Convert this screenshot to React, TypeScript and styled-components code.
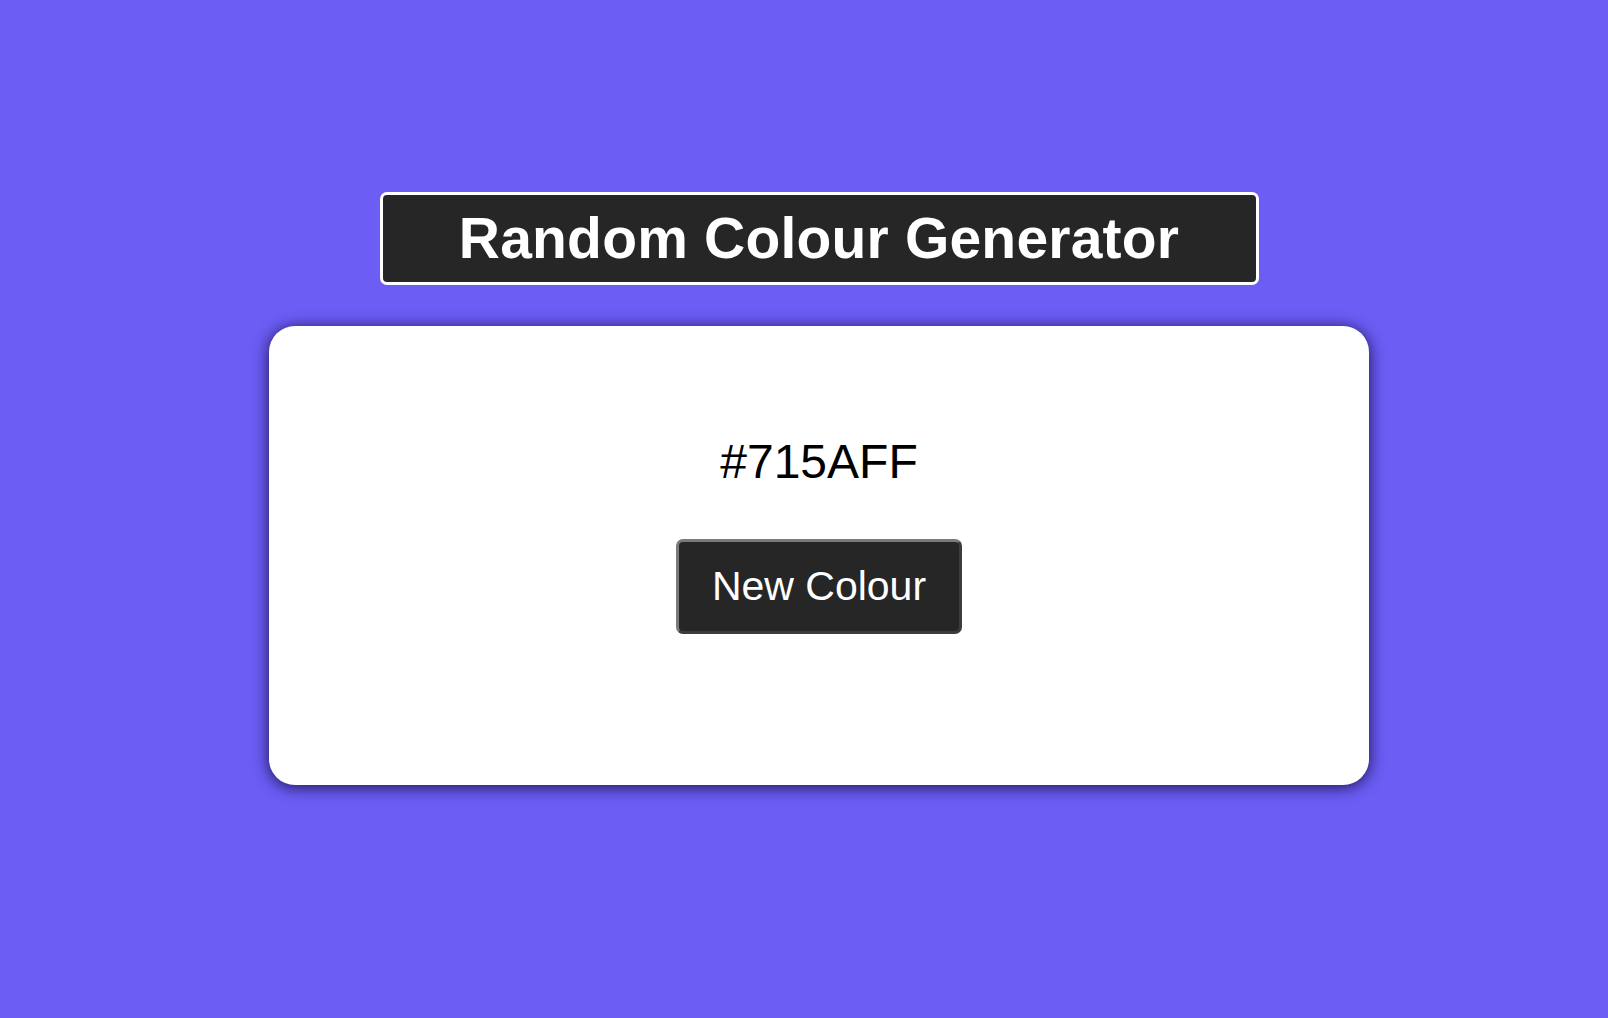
import { FC, useState } from "react";
import styled, { createGlobalStyle } from "styled-components";

const GlobalStyle = createGlobalStyle`
  body {
    margin: 0;
    background-color: #6c5df5;
    font-family: "Liberation Sans", Arial, Helvetica, sans-serif;
  }
`;

const Page = styled.div`
  min-height: 100vh;
  box-sizing: border-box;
  padding: 192px 0 0 30px;
  display: flex;
  flex-direction: column;
  align-items: center;
  gap: 41px;
`;

const Title = styled.h1`
  margin: 0;
  box-sizing: border-box;
  width: 879px;
  height: 93px;
  display: flex;
  align-items: center;
  justify-content: center;
  background-color: #262626;
  border: 3px solid #ffffff;
  border-radius: 7px;
  color: #ffffff;
  font-size: 57px;
  font-weight: 700;
  letter-spacing: 0.2px;
  padding-bottom: 2px;
`;

const Card = styled.main`
  box-sizing: border-box;
  width: 1100px;
  height: 459px;
  background-color: #ffffff;
  border-radius: 26px;
  box-shadow: 0 2px 16px rgba(10, 5, 50, 0.85);
  padding-top: 108px;
  display: flex;
  flex-direction: column;
  align-items: center;
  gap: 50px;
`;

const HexCode = styled.p`
  margin: 0;
  font-size: 48px;
  color: #000000;
`;

const NewColourButton = styled.button`
  box-sizing: border-box;
  width: 286px;
  height: 95px;
  background-color: #262626;
  color: #ffffff;
  font-family: inherit;
  font-size: 41px;
  border: 3px solid;
  border-color: #7a7a7a #3c3c3c #3c3c3c #7a7a7a;
  border-radius: 7px;
  cursor: pointer;

  :active {
    transform: scale(0.97);
  }
`;

const randomHex = () =>
  "#" +
  Math.floor(Math.random() * 0xffffff)
    .toString(16)
    .padStart(6, "0")
    .toUpperCase();

const App: FC = () => {
  const [colour, setColour] = useState("#715AFF");

  return (
    <>
      <GlobalStyle />
      <Page>
        <Title>Random Colour Generator</Title>
        <Card>
          <HexCode>{colour}</HexCode>
          <NewColourButton onClick={() => setColour(randomHex())}>
            New Colour
          </NewColourButton>
        </Card>
      </Page>
    </>
  );
};

export default App;
